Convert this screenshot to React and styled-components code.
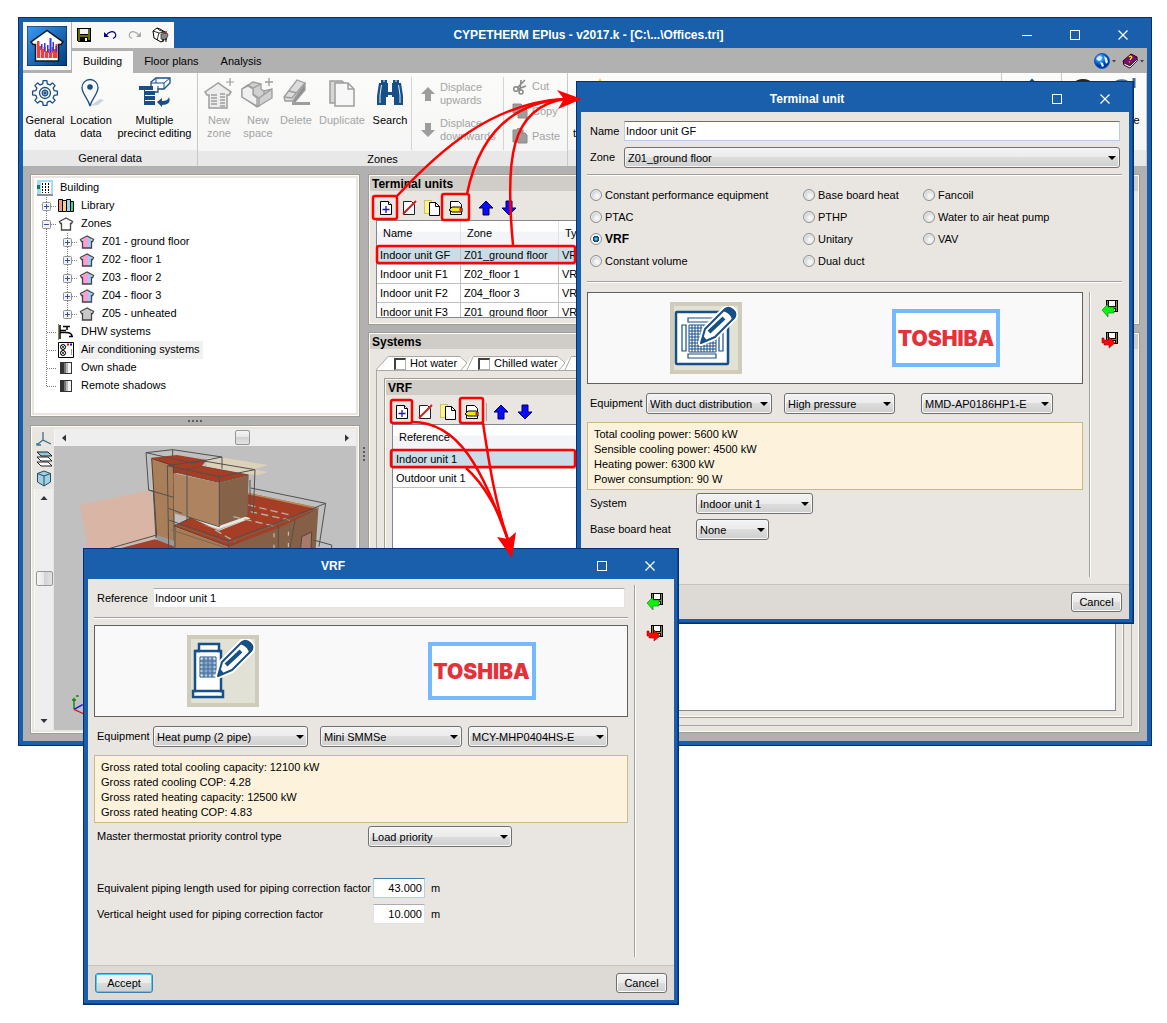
import styled, { createGlobalStyle, css } from "styled-components";

const BLUE = "#195fab";
const BEIGE = "#e9e6e1";
const INK = "#174f87";
const GREY = "#9d9d9d";

const GlobalStyle = createGlobalStyle`
  body {
    margin: 0;
    background-color: white;
  }

  * {
    box-sizing: border-box;
  }

  body, button, input, select, table {
    font-family: "Liberation Sans", Arial, sans-serif;
    font-size: 11px;
    line-height: 13px;
    color: black;
  }

  svg {
    display: block;
    flex: none;
  }
`;

const Desktop = styled.div`
  position: relative;
  min-height: 1023px;
  padding: 17px 15px 0 18px;
`;

/* ---------- windows ---------- */

const Frame = styled.section`
  border: 1px solid #052f74;
  padding: 4px;
  background-color: ${BLUE};
`;

const DialogFrame = styled(Frame)`
  position: absolute;
  left: ${(p) => p.$left}px;
  top: ${(p) => p.$top}px;
  width: ${(p) => p.$width}px;
  box-shadow: inset -1px -1px 0 #0b4590;
`;

const TitleBar = styled.header`
  display: flex;
  align-items: center;
  height: 26px;
  background-color: ${BLUE};
`;

const Title = styled.h1`
  flex: 1;
  margin: 0;
  color: white;
  font-size: 12px;
  font-weight: bold;
  text-align: center;
`;

const WindowButton = styled.button`
  display: flex;
  align-items: center;
  justify-content: center;
  width: 48px;
  height: 26px;
  padding: 0;
  border: none;
  background: none;
`;

const DialogBody = styled.div`
  background-color: ${BEIGE};
  padding: ${(p) => p.$pad};
`;

const DialogFooter = styled.footer`
  display: flex;
  justify-content: ${(p) => (p.$split ? "space-between" : "flex-end")};
  align-items: center;
  height: 35px;
  padding: 0 7px;
  border-top: 1px solid #c5c3be;
  background-color: #dddad5;
`;

const PushButton = styled.button`
  height: 20px;
  min-width: ${(p) => (p.$primary ? 58 : 51)}px;
  padding: 0 7px;
  border: 1px solid ${(p) => (p.$primary ? "#3c7fb1" : "#707070")};
  border-radius: 3px;
  background: linear-gradient(#f3f3f3, #ebebeb 50%, #dddddd 50%, #cfcfcf);
  box-shadow: inset 0 0 0 1px ${(p) => (p.$primary ? "#48d0f5" : "#fbfbfb")};
`;

/* ---------- main window header ---------- */

const Header = styled.div`
  display: grid;
  grid-template-columns: 49px 1fr;
`;

const AppBadge = styled.div`
  grid-row: span 2;
  display: flex;
  align-items: center;
  justify-content: center;
  border-right: 1px solid #b1b1b1;
  border-bottom: 3px solid #b1b1b1;
  background-color: #f8f8f6;
`;

const QuickBar = styled.div`
  display: flex;
  align-items: center;
  width: 102px;
  height: 26px;
  background-color: #f8f8f6;
`;

const ToolButton = styled.button`
  display: flex;
  align-items: center;
  justify-content: center;
  width: ${(p) => p.$width || 24}px;
  height: 24px;
  padding: 0;
  border: none;
  background: none;
`;

const TabBar = styled.nav`
  display: flex;
  align-items: flex-end;
  height: 25px;
  background-color: #b1b1b1;
`;

const RibbonTab = styled.button`
  height: 22px;
  padding: 0 11px 2px;
  border: none;
  background-color: ${(p) => (p.$active ? "#fafaf8" : "transparent")};
`;

const TabBarEnd = styled.div`
  display: flex;
  margin-left: auto;
`;

/* ---------- ribbon ---------- */

const Ribbon = styled.div`
  display: flex;
  height: 93px;
  background: linear-gradient(#fbfbf9, #f5f5f5);
`;

const RibbonGroup = styled.div`
  display: flex;
  flex-direction: column;
  flex: ${(p) => (p.$width ? `0 0 ${p.$width}px` : "1")};
  overflow: hidden;
  border-right: 1px solid #c9c9c9;
`;

const GroupItems = styled.div`
  display: flex;
  flex: 1;
  padding: 4px 0 0 ${(p) => p.$indent || 0}px;
`;

const GroupLabel = styled.div`
  height: 16px;
  padding-top: 2px;
  background-color: #e8e8e8;
  text-align: center;
`;

const RibbonButton = styled.button`
  display: flex;
  flex-direction: column;
  align-items: center;
  gap: 5px;
  width: ${(p) => p.$width}px;
  padding: 0;
  border: none;
  background: none;
  color: ${(p) => (p.$disabled ? "#a4a4a4" : "black")};
  white-space: pre;
`;

const CroppedCaption = styled.span`
  align-self: flex-start;
  margin-top: 13px;
`;

const RibbonStack = styled.div`
  display: flex;
  flex-direction: column;
  width: ${(p) => p.$width}px;
  margin-bottom: 1px;
  padding-left: 8px;
  border-left: 1px solid #d4d4d4;
`;

const StackButton = styled.button`
  display: flex;
  align-items: center;
  gap: 4px;
  height: ${(p) => p.$height}px;
  padding: 0;
  border: none;
  background: none;
  color: #a4a4a4;
  text-align: left;
  white-space: pre;
`;

/* ---------- work area ---------- */

const WorkArea = styled.main`
  display: flex;
  padding: 8px 7px 7px;
  background-color: #b1b1b1;
`;

const LeftColumn = styled.div`
  display: flex;
  flex-direction: column;
  flex: 0 0 330px;
`;

const RightColumn = styled.div`
  display: flex;
  flex-direction: column;
  gap: 7px;
  flex: 1;
  min-width: 0;
`;

const panelEdge = css`
  border: 1px solid #a19d92;
  box-shadow: inset 0 0 0 1px #fdfcf3;
  background-color: ${BEIGE};
`;

const TreePanel = styled.div`
  ${panelEdge}
  padding: 3px;
`;

const TreeList = styled.ul`
  margin: 0;
  padding: 1px 3px 18px;
  list-style: none;
  background-color: white;
`;

const TreeRow = styled.li`
  display: flex;
  align-items: center;
  height: 18px;
`;

const TreeText = styled.span`
  margin-left: 5px;
  padding: 2px 3px 3px 2px;
  background-color: ${(p) => (p.$selected ? "#f0f0f0" : "transparent")};
`;

const SplitterDots = styled.div`
  height: 8px;
  display: flex;
  align-items: center;
  justify-content: center;

  &::before {
    content: "";
    width: 15px;
    height: 2px;
    background: repeating-linear-gradient(90deg, #5c5c5c 0 2px, transparent 2px 4px);
  }
`;

const VerticalDots = styled.div`
  width: 8px;
  padding: 273px 3px 0;

  &::before {
    content: "";
    display: block;
    height: 14px;
    background: repeating-linear-gradient(#5c5c5c 0 2px, transparent 2px 4px);
  }
`;

const ViewPanel = styled.div`
  ${panelEdge}
  display: grid;
  grid-template-columns: 20px 1fr;
  grid-template-rows: 17px 1fr;
  flex: 1;
  padding: 3px;
`;

const ViewTools = styled.div`
  grid-row: span 2;
  display: flex;
  flex-direction: column;
  align-items: center;
`;

const ScrollTrack = styled.div`
  display: flex;
  flex-direction: ${(p) => (p.$vertical ? "column" : "row")};
  align-items: center;
  justify-content: space-between;
  flex: 1;
  align-self: stretch;
  padding: ${(p) => (p.$vertical ? "5px 0" : "0 5px")};
  margin-right: ${(p) => (p.$vertical ? 1 : 0)}px;
  background-color: #eeeeee;
  border-left: 1px solid #f8f8f8;
`;

const ScrollThumb = styled.div`
  width: ${(p) => (p.$vertical ? 17 : 15)}px;
  height: 15px;
  margin: ${(p) => (p.$vertical ? "0 0 62px" : "0 0 0 74px")};
  border: 1px solid #979797;
  border-radius: 2px;
  background: linear-gradient(${(p) => (p.$vertical ? "90deg" : "180deg")}, #f5f5f5, #e6e6e6 50%, #d2d2d2 50%, #e2e2e2);
`;

const Canvas = styled.div`
  min-height: 0;
  overflow: hidden;
  background-color: #c0c0c0;
`;

const Panel = styled.section`
  ${panelEdge}
  padding: 1px 1px 6px;
`;

const PanelTitle = styled.h2`
  margin: 0;
  height: 15px;
  padding-left: 2px;
  background-color: #d0cdc8;
  font-size: 12px;
  line-height: 16px;
  font-weight: bold;
`;

const Toolbar = styled.div`
  display: flex;
  align-items: center;
  height: 29px;
  padding: 5px 0 0 4px;
`;

const ToolDivider = styled.span`
  width: 1px;
  height: 18px;
  margin: 0 2px;
  background-color: #a9a69f;
`;

const GridFrame = styled.div`
  height: ${(p) => p.$height}px;
  margin: 0 6px;
  overflow: hidden;
  border: 1px solid #828790;
  background-color: white;
`;

const Grid = styled.table`
  width: 100%;
  table-layout: fixed;
  border-collapse: separate;
  border-spacing: 0;
  text-align: left;

  th {
    height: 25px;
    padding: 0 6px;
    border-right: 1px solid #e0e3e8;
    background: linear-gradient(white 40%, #f2f4f7 45%, #f4f5f8);
    font-weight: normal;
  }

  td {
    height: 19px;
    padding: 0 3px;
    border-right: 1px solid #c0c0c0;
    border-bottom: 1px solid #c0c0c0;
    white-space: nowrap;
  }
`;

const GridRow = styled.tr`
  background-color: ${(p) => (p.$selected ? "#c9dde8" : "white")};
`;

const SystemTabs = styled.div`
  display: flex;
  margin: 7px 6px 0;
`;

const SystemTab = styled.label`
  display: flex;
  align-items: center;
  gap: 4px;
  width: ${(p) => p.$width}px;
  height: 14px;
  padding-left: 5px;
  border-top: 1px solid #aaa7a0;
  background-color: white;
  white-space: nowrap;
`;

const TabCheck = styled.input`
  appearance: none;
  flex: none;
  width: 12px;
  height: 12px;
  margin: 0;
  border: 1px solid #b0b0b0;
  border-top: 2px solid #404040;
  border-left: 2px solid #404040;
  background-color: white;
`;

const SystemBox = styled.div`
  margin: 0 6px;
  padding: 7px;
  border: 1px solid #aaa7a0;
`;

/* ---------- form parts ---------- */

const FormRow = styled.div`
  display: grid;
  grid-template-columns: ${(p) => p.$columns};
  align-items: center;
  margin-top: ${(p) => p.$gap || 0}px;
  padding-left: 3px;
  white-space: nowrap;
`;

const TextBox = styled.input`
  width: 100%;
  height: 20px;
  padding: 0 2px 0 1px;
  border: 1px solid ${(p) => (p.$focus ? "#b5cfe7" : "#e2e3ea")};
  border-top-color: ${(p) => (p.$focus ? "#3d7bad" : "#abadb3")};
  background-color: white;
  text-align: ${(p) => (p.$number ? "right" : "left")};
`;

const SelectWrap = styled.span`
  position: relative;
  display: block;

  &::after {
    content: "";
    position: absolute;
    top: 9px;
    right: 4px;
    border: 4px solid transparent;
    border-top-color: black;
    border-bottom: none;
    pointer-events: none;
  }
`;

const SelectBox = styled.select`
  appearance: none;
  display: block;
  width: 100%;
  height: 21px;
  padding: 1px 14px 0 3px;
  border: 1px solid #707070;
  border-radius: 3px;
  background: linear-gradient(#f3f3f3, #ebebeb 50%, #dddddd 50%, #cfcfcf);
  box-shadow: inset 0 0 0 1px #f7f7f7;
`;

const Rule = styled.hr`
  height: 2px;
  margin: ${(p) => p.$margin};
  border: none;
  border-top: 1px solid #a0a0a0;
  border-bottom: 1px solid white;
`;

const RadioGrid = styled.div`
  display: grid;
  grid-template-columns: 213px 120px 1fr;
  padding-left: 3px;
`;

const RadioLabel = styled.label`
  display: flex;
  align-items: center;
  gap: 3px;
  height: 22px;
  font-size: ${(p) => (p.$bold ? 12 : 11)}px;
  font-weight: ${(p) => (p.$bold ? "bold" : "normal")};
`;

const Radio = styled.input`
  appearance: none;
  width: 12px;
  height: 12px;
  margin: 0;
  border: 1px solid #8e8f8f;
  border-radius: 50%;
  background: radial-gradient(circle at 60% 60%, #f4f4f4 20%, #cfd2d4 60%);
  box-shadow: inset 0 0 0 1px #f4f4f4;

  &:checked {
    background: radial-gradient(circle, #5cc8ee 8%, #0b4a78 35%, #12364f 42%, #f4f4f4 50%);
  }
`;

const Split = styled.div`
  display: flex;
`;

const FormSide = styled.div`
  flex: 1;
  min-width: 0;
`;

const ActionSide = styled.div`
  display: flex;
  flex-direction: column;
  align-items: center;
  gap: 8px;
  width: 40px;
  min-height: ${(p) => p.$minHeight}px;
  margin-left: 6px;
  margin-right: ${(p) => p.$outdent}px;
  padding-top: 4px;
  border-left: 1px solid #a0a0a0;
  box-shadow: inset 1px 0 0 white;
`;

const PictureBox = styled.div`
  display: flex;
  align-items: center;
  justify-content: space-around;
  height: 92px;
  padding: 0 7px;
  border: 1px solid #606060;
  background-color: #f9f9f9;
`;

const PictureFrame = styled.div`
  width: 72px;
  height: 72px;
  border: 4px solid #cfccb9;
  background-color: #e1e1d5;
`;

const BrandFrame = styled.div`
  display: flex;
  align-items: center;
  justify-content: center;
  width: 108px;
  height: 58px;
  border: 4px solid #76b9ff;
  background-color: white;
  color: #e5323a;
  font-family: Inter, "Liberation Sans", sans-serif;
  font-size: 21px;
  font-weight: 900;
`;

const InfoBox = styled.div`
  margin-top: 8px;
  padding: 4px 6px 2px;
  border: 1px solid #c6bd84;
  background-color: #fdf3dc;

  p {
    margin: 0;
    line-height: 15px;
  }
`;

const Unit = styled.span`
  padding-left: 6px;
`;

const Annotations = styled.svg`
  position: absolute;
  left: 0;
  top: 0;
  pointer-events: none;
`;

/* ---------- icons ---------- */

const MinimizeIcon = () => (
  <svg width="12" height="12" stroke="white">
    <path d="M1 6.5h10" />
  </svg>
);

const MaximizeIcon = () => (
  <svg width="12" height="12" fill="none" stroke="white">
    <rect x="1.5" y="1.5" width="9" height="9" />
  </svg>
);

const CloseIcon = () => (
  <svg width="12" height="12" stroke="white" strokeWidth="1.3">
    <path d="M1.500 1.500l9 9M10.500 1.500l-9 9" />
  </svg>
);

const AppIcon = () => (
  <svg width="40" height="40" viewBox="0 0 40 40">
    <defs>
      <linearGradient id="appBg" x1="0" y1="0" x2="1" y2="1">
        <stop offset="0" stopColor="#3b9bf4" />
        <stop offset="1" stopColor="#023a7c" />
      </linearGradient>
    </defs>
    <rect width="40" height="40" fill="url(#appBg)" stroke="#101c33" />
    <path d="M20 4.500L4 16l2 2.500h2.500V35h23V18.500H34l2-2.500z" fill="white" stroke="#101820" strokeWidth="1.500" />
    <path d="M10 32V15h2.500v5h2v3h2v-2h2v4h2v-2h2v4h2v-6h2v2h2v-5h2v14z" fill="#f33d3d" />
    <path d="M14 18h1.500v5H14zM17 17h1.500v8H17zM20 19h1.500v7H20zM22.500 12h2v15h-2zM25.500 16H27v9h-1.500zM28.500 20H30v6h-1.500z" fill="#3434e8" />
    <path d="M13 24h1v8h-1zM17 26h1v6h-1zM21 27h1v5h-1zM25 27h1v5h-1z" fill="white" opacity=".7" />
  </svg>
);

const FloppyIcon = () => (
  <svg width="14" height="14" shapeRendering="crispEdges">
    <path d="M0 0h14v14H1L0 13z" fill="#000" />
    <path d="M1 1h2v6h8V1h2v11h-2V9H3v4H1z" fill="#6b6b00" />
    <path d="M3 1h8v5H3z" fill="#f2f2f2" />
    <path d="M8 10h2v3H8z" fill="white" />
  </svg>
);

const UndoIcon = ({ color = "#000080", flip }) => (
  <svg width="14" height="12" viewBox="0 0 14 12">
    <g transform={flip ? "translate(14 0) scale(-1 1)" : undefined}>
      <path d="M1 3v5h5z" fill={color} />
      <path d="M3 6.500C6 2 10 2 12 4c1.500 2 1 4-2 5.500" fill="none" stroke={color} strokeWidth="1.200" />
    </g>
  </svg>
);

const PrintIcon = () => (
  <svg width="18" height="16" viewBox="0 0 18 16">
    <path d="M1 4l4-3 3 1 5 3 1 2-3 7-2 1-7-4z" fill="white" stroke="black" />
    <path d="M1 4l6 2 6-1M7 6l-2 7M5 1l2 2 5 2" fill="none" stroke="black" strokeWidth=".8" />
    <path d="M9 7l6-1 1 2-2 5-5-1z" fill="#888" stroke="#222" strokeWidth=".7" />
    <path d="M11 12v3M14 11v4" stroke="black" />
    <path d="M13 5h2" stroke="red" strokeWidth="1.500" />
  </svg>
);

const GlobeIcon = () => (
  <svg width="22" height="18" viewBox="0 0 22 18">
    <defs>
      <radialGradient id="globe" cx=".35" cy=".3">
        <stop offset="0" stopColor="#b9e6ff" />
        <stop offset=".5" stopColor="#268ae6" />
        <stop offset="1" stopColor="#02399a" />
      </radialGradient>
    </defs>
    <circle cx="8" cy="9" r="7.500" fill="url(#globe)" stroke="#0a55c9" />
    <path d="M2 7l3-3 3 1-1 3-2 1zM10 4l3 2 1 4-2 2-1-3zM6 10l3 1 1 3-2 1z" fill="#d8f3ff" />
    <path d="M18 8h4l-2 2.500z" fill="#444" />
  </svg>
);

const HelpIcon = () => (
  <svg width="22" height="18" viewBox="0 0 22 18">
    <path d="M1 9l8-7 6 3v4l-7 7-6-3z" fill="#7c0b76" stroke="#23021f" />
    <path d="M2 11l6 3 7-7v2l-7 7-6-3z" fill="white" stroke="#23021f" strokeWidth=".7" />
    <path d="M7 5c2-2 4 0 2 1.500L8 8M7.500 9.500v1" stroke="#ffe600" strokeWidth="1.300" fill="none" />
    <path d="M18 8h4l-2 2.500z" fill="#444" />
  </svg>
);

const gearOutline = () => {
  const n = 8;
  const points = [];
  for (let i = 0; i < n; i++) {
    const mid = (i * 2 * Math.PI) / n;
    [
      [-0.24, 9.5],
      [-0.15, 12.5],
      [0.15, 12.5],
      [0.24, 9.5],
    ].forEach(([da, r]) => {
      points.push(`${(r * Math.sin(mid + da)).toFixed(1)},${(-r * Math.cos(mid + da)).toFixed(1)}`);
    });
  }
  return points.join(" ");
};

const GearIcon = () => (
  <svg width="30" height="32" viewBox="-15 -16 30 32" fill="#fafafa" stroke={INK} strokeWidth="1.300">
    <polygon points={gearOutline()} strokeLinejoin="round" />
    <circle r="5.500" />
    <circle r="2.800" />
    <circle r="1" fill={INK} />
  </svg>
);

const PinIcon = () => (
  <svg width="30" height="32" viewBox="0 0 30 32">
    <path d="M14 29l10-7 4 1-6 5z" fill="#c9d6e2" />
    <path d="M14 29C12 21 6 17 6 10.500a8 8 0 0 1 16 0C22 17 16 21 14 29z" fill="#fafafa" stroke={INK} strokeWidth="1.300" />
    <circle cx="14" cy="10" r="2.800" fill={INK} />
  </svg>
);

const PrecinctIcon = () => (
  <svg width="34" height="32" viewBox="0 0 34 32">
    <path d="M13 5l5-4h14v5l-6 6h-6v3h-7z" fill="#fafafa" stroke={INK} strokeWidth="1.300" />
    <path d="M18 1v5h8l6-5M26 6v6M13 6h5M20 12V9" fill="none" stroke={INK} />
    <path d="M1 9h14v4H7v1h10v4H7v1h10v4H7v1h10v4H6V13H1z" fill={INK} />
    <path d="M8 18h9v1H8zM8 23h9v1H8zM8 13h9v1H8z" fill="#fafafa" />
    <path d="M19 25l5-4v3c4 0 6-1 7-4 2 5-1 8-7 8v2z" fill={INK} />
  </svg>
);

const ZoneIcon = () => (
  <svg width="32" height="32" viewBox="0 0 32 32" fill="none" stroke={GREY}>
    <path d="M15 6L2 15l2 3h2v13h18V18h2l2-3z" fill="#ededed" strokeWidth="1.500" />
    <path d="M8 18h6M8 21h6M8 24h6M8 27h6M17 17h5M17 20h5M17 23h5M17 26h5M17 29h5" strokeWidth="1.500" />
    <path d="M27 1v8M23 5h8" strokeWidth="1.200" />
  </svg>
);

const SpaceIcon = () => (
  <svg width="34" height="32" viewBox="0 0 34 32" fill="#d0d0d0" stroke={GREY} strokeWidth="1.300">
    <path d="M1 12l11-7 8 2v5l3 2 8-2v9L16 30 1 20z" />
    <path d="M1 12l6-4 5 3v6l6 4v9M18 21l13-9M7 8v3M12 11l8-4M23 14v4" fill="none" />
    <path d="M1 12l6-3 5 3v6l4 3v8L1 20z" fill="#f0f0f0" />
    <path d="M28 1v8M24 5h8" />
  </svg>
);

const EraserIcon = () => (
  <svg width="32" height="32" viewBox="0 0 32 32" stroke={GREY} strokeWidth="1.300">
    <path d="M4 20L17 3l8 3-12 18H5z" fill="#dcdcdc" />
    <path d="M4 20l8 1 12-14M9 14l8 2" fill="none" />
    <path d="M13 24l12-17v6L15 25z" fill="#8e8e8e" />
    <path d="M12 26.500h18" strokeWidth="3" />
  </svg>
);

const DuplicateIcon = () => (
  <svg width="30" height="32" viewBox="0 0 30 32" stroke={GREY} strokeWidth="1.500">
    <path d="M3 4h12l4 4v18H3z" fill="#d7d7d7" />
    <path d="M8 6h13l6 6v17H8z" fill="#f7f7f7" />
    <path d="M21 6v6h6" fill="none" />
  </svg>
);

const BinocularsIcon = () => (
  <svg width="30" height="32" viewBox="0 0 30 32" fill={INK}>
    <path d="M6 3h6v3h1v8h4V6h1V3h6v3h2l2 13v9h-9v-8h-2v-2h-4v2h-2v8H2v-9L4 6h2z" />
    <path d="M6.500 8L5 18v8M23.500 8L25 18v8M13 14.500h4M9 3v2M21 3v2" stroke="#e8eef5" fill="none" />
  </svg>
);

const ArrowIcon = ({ down, color = GREY, outline, size = 14 }) => (
  <svg width={size} height={size} viewBox="-1 -1 16 16">
    <path
      d="M7 0l7 7h-4v7H4V7H0z"
      fill={color}
      stroke={outline}
      transform={down ? "rotate(180 7 7)" : undefined}
    />
  </svg>
);

const ScissorsIcon = () => (
  <svg width="16" height="16" viewBox="0 0 16 16" fill="none" stroke="#888" strokeWidth="1.500">
    <circle cx="4" cy="10" r="2.300" />
    <circle cx="9" cy="13" r="2" />
    <path d="M5 9l8-8M8 11L9 1M6 10l8-3" />
  </svg>
);

const CopyIcon = () => (
  <svg width="16" height="16" viewBox="0 0 16 16" fill={GREY} stroke="#8a8a8a">
    <path d="M1 1h8l2 2v7H1z" />
    <path d="M6 5h7l2 2v8H6z" />
  </svg>
);

const PasteIcon = () => (
  <svg width="16" height="16" viewBox="0 0 16 16" fill={GREY} stroke="#8a8a8a">
    <path d="M1 2h4l1-2h2l1 2h2v12H1z" />
    <path d="M6 5h7l2 2v8H6z" />
  </svg>
);

const SheetPath = "M2.500 1.500h8l3 3v10h-11z";

const NewIcon = () => (
  <svg width="16" height="16" fill="white" stroke="black">
    <path d={SheetPath} />
    <path d="M10.500 1.500v3h3" />
    <path d="M4.500 9.500h7M8 6v7" stroke="#1a1a9c" strokeWidth="1.300" />
  </svg>
);

const RemoveIcon = () => (
  <svg width="16" height="16" fill="white" stroke="#222">
    <path d={SheetPath} />
    <path d="M2 14L15 1" stroke="#d81a1a" strokeWidth="2" />
  </svg>
);

const CopySheetIcon = () => (
  <svg width="18" height="16" stroke="black">
    <path d="M1.500.5h7v13h-7z" fill="#fdf58a" stroke="#a29a1c" strokeDasharray="1 1" />
    <path d="M6.500 2.500h6l4 4v9h-10z" fill="white" />
    <path d="M12.500 2.500v4h4" fill="none" />
  </svg>
);

const EditIcon = () => (
  <svg width="16" height="16" stroke="black">
    <path d={SheetPath} fill="white" />
    <path d="M1 10l3-3h8l2 1v4H4z" fill="#f6ea12" />
    <path d="M11.500 8h2v3.500h-2z" fill="#d42222" stroke="none" />
  </svg>
);

const ImportIcon = ({ exportMode }) => (
  <svg width="18" height="17" viewBox="0 0 18 17">
    <path d="M5 0h12v12H5z" fill="black" />
    <path d="M6 1h1v10H6zM15 1h1v10h-1zM8 7h7v1H8z" fill="#8a8527" />
    <path d="M8 1h6v5H8zM12 9h2v2h-2z" fill="white" />
    {exportMode ? (
      <path d="M1 6h2v2h5V5l6 6-6 5v-3H3v-2H1z" fill="#fb0707" stroke="#a80000" strokeWidth=".6" />
    ) : (
      <path d="M1 10l6-6v3h6v6H7v4z" fill="#0bf30b" stroke="#167016" strokeWidth=".6" />
    )}
  </svg>
);

const AxisIcon = () => (
  <svg width="16" height="20" viewBox="0 0 16 20" fill="none" stroke="#3c7189" strokeWidth="1.300">
    <path d="M7 3v8l8 4M7 11l-5 4M5 16H1v-2" />
  </svg>
);

const LayersIcon = () => (
  <svg width="17" height="20" viewBox="0 0 17 20" stroke="#222">
    <path d="M1 13h11l4 4H5z" fill="white" />
    <path d="M1 8h11l4 4H5z" fill="white" />
    <path d="M1 3h11l4 4H5z" fill="#8fc8e0" />
  </svg>
);

const CubeIcon = () => (
  <svg width="16" height="20" viewBox="0 0 16 20" fill="#9fd1e6" stroke="#2a4a5e">
    <path d="M1.500 4.500L8 2l6.500 2.500V13L8 17l-6.500-4z" />
    <path d="M1.500 4.500L8 7l6.500-2.500M8 7v10" fill="none" />
  </svg>
);

const TinyArrow = ({ rotate }) => (
  <svg width="8" height="8" viewBox="0 0 8 8">
    <path d="M4 2l3.500 4h-7z" fill="#333" transform={`rotate(${rotate} 4 4)`} />
  </svg>
);

const BuildingTreeIcon = () => (
  <svg width="16" height="16" shapeRendering="crispEdges">
    <path d="M0 0h16v16H0z" fill="#a5dcf5" />
    <path d="M4 2h10v12H4z" fill="white" />
    <path d="M5.500 3v10M8.500 3v10M11.500 3v10" stroke="black" strokeDasharray="2 1" />
    <path d="M0 5h3v4H0z" fill="#147a52" />
    <path d="M0 14h16v2H0z" fill="#8e8e8e" />
  </svg>
);

const BooksIcon = () => (
  <svg width="16" height="16" stroke="black">
    <path d="M.5 1.500h4v12h-4z" fill="#f0a184" />
    <path d="M4.500 2.500h4v11h-4z" fill="#f8d47c" />
    <path d="M8.500 1.500h4v12h-4z" fill="#9ed3f5" />
    <path d="M12.500 3.500h3v10h-3z" fill="#45d58a" />
  </svg>
);

const HouseIcon = ({ left = "white", right = "white" }) => (
  <svg width="16" height="16">
    <path d="M9 2.500L3.500 5v9H9z" fill={left} />
    <path d="M9 2.500L12.500 5v9H9z" fill={right} />
    <path d="M8 2L1.500 5.500l1 2h1v6.500h9V7.500h1l1-2z" fill="none" stroke="#444" strokeWidth="1.300" />
  </svg>
);

const TapIcon = () => (
  <svg width="16" height="16">
    <path d="M0 0h1v16H0z" fill="#8c8c3a" />
    <path d="M2 1v14M2 8.500h6c4 0 6 1 6 4M2 6.500h6M9 2v4M5 2.500h7M11 12.500h4" fill="none" stroke="black" strokeWidth="1.500" />
  </svg>
);

const AirIcon = () => (
  <svg width="16" height="16" fill="none" stroke="black">
    <path d="M.5.5h15v15H.5z" fill="white" />
    <circle cx="5" cy="5" r="2.500" />
    <circle cx="5" cy="11" r="2.500" />
    <path d="M3 3l4 4M7 3L3 7M3 9l4 4M7 9l-4 4" strokeWidth=".7" />
    <path d="M9 2.500h2" stroke="red" strokeWidth="2" />
    <path d="M12 2.500h2" stroke="blue" strokeWidth="2" />
    <path d="M13.500 7v6" stroke="#999" />
  </svg>
);

const ShadeIcon = () => (
  <svg width="16" height="16" shapeRendering="crispEdges">
    <path d="M2 2h12v12H2z" fill="#333" />
    <path d="M6 3h2v10H6z" fill="#777" />
    <path d="M8 3h2v10H8z" fill="#bbb" />
    <path d="M10 3h3v10h-3z" fill="#f2f2f2" />
  </svg>
);

const Guide = ({ vertical = "full", branch, box }) => (
  <svg width="21" height="18" fill="none" stroke="#808080">
    {vertical === "full" && <path d="M9.500 0v18" strokeDasharray="1 1" />}
    {vertical === "half" && <path d="M9.500 0v9" strokeDasharray="1 1" />}
    {branch && <path d="M10 9.500h10" strokeDasharray="1 1" />}
    {box && (
      <g>
        <rect x="5.500" y="5.500" width="8" height="8" rx="1" fill="#f3f3f3" stroke="#919191" />
        <path d={box === "plus" ? "M7 9.500h5M9.500 7v5" : "M7 9.500h5"} stroke="#3050a8" />
      </g>
    )}
  </svg>
);

const Pencil = () => (
  <g strokeLinejoin="round">
    <path d="M27 37l4-14L51 3q4-3 8 1t1 8L41 31z" fill="white" stroke="white" strokeWidth="6" />
    <path d="M27 37l4-14L51 3q4-3 8 1t1 8L41 31z" fill="white" stroke={INK} strokeWidth="2" />
    <path d="M27 37l2-7q2 1 4 5zM49 5l3-3q4-1 8 2t1 8l-3 3q0-7-9-10z" fill={INK} stroke="none" />
    <path d="M50 12L35 26" stroke={INK} strokeWidth="4" />
  </g>
);

const gridLines = (x, y, w, h, step) => {
  let d = "";
  for (let i = 0; i <= w; i += step) d += `M${x + i} ${y}v${h}`;
  for (let j = 0; j <= h; j += step) d += `M${x} ${y + j}h${w}`;
  return d;
};

const DuctPicture = () => (
  <svg width="64" height="64" viewBox="0 0 64 64" fill="white" stroke={INK}>
    <rect x="2" y="6" width="52" height="52" rx="1" strokeWidth="2.500" />
    <path d="M14 12h28v4H14zM14 48h28v4H14zM8 19h4v26H8zM45 19h4v26h-4z" strokeWidth="1.200" />
    <path d={gridLines(15, 19, 27, 27, 3)} />
    <Pencil />
  </svg>
);

const HeatPumpPicture = () => (
  <svg width="64" height="64" viewBox="0 0 64 64" fill="white" stroke={INK} strokeWidth="2.500">
    <path d="M8 5h20v7h2v40h2v6H2v-6h2V12h4z" />
    <path d="M5 12h24M4 52h27" />
    <path d={gridLines(9, 18, 16, 20, 4)} strokeWidth="1" />
    <path d={gridLines(11, 20, 12, 16, 4)} strokeWidth=".6" />
    <Pencil />
  </svg>
);

const ModelView = () => (
  <svg width="302" height="284" viewBox="102 78 906 852" strokeLinejoin="round">
    <path d="M180 255l212-45 18 140-202 60z" fill="#d9b5a5" />
    <path d="M560 115l50-2 135 22-45 13 45 8-35 10-150-25z" fill="#ddd1ba" />
    <path d="M395 113l75-8 90 15-20 25-85 18z" fill="#a63e25" />
    <path d="M395 115l65 22 3 247-53-34z" fill="#a97f5a" stroke="#5d3a26" strokeWidth="3" />
    <path d="M410 345l53 18v25h-53z" fill="#999" />
    <path d="M280 390l125-32 60 22v60H280z" fill="#a5412b" />
    <path d="M682 220l213 45-125 65-145 50-163-62 50-24h85z" fill="#a63e25" stroke="#6b3c2b" strokeWidth="3" />
    <path d="M682 220l213 45" stroke="#b98a5b" strokeWidth="5" />
    <path d="M462 320l163 60v70H462z" fill="#a77b56" />
    <path d="M625 380l145-54 125-60-12 184H625z" fill="#856046" />
    <path d="M510 292l20-4 66 26 76-25 20 6-95 37z" fill="#e9e6e1" />
    <path d="M540 311l56 16 80-28-79 32z" fill="#b5b0a9" />
    <path d="M460 155l85-16 140 26-88 22z" fill="#a63e25" stroke="#7b4433" strokeWidth="3" />
    <path d="M460 160l137 28v130l-135-38z" fill="#ad8360" />
    <path d="M597 188l89-22-4 122-85 30z" fill="#866249" />
    <path d="M845 350l30-14-2 50-32 10z" fill="#a87a6c" stroke="#554433" strokeWidth="3" />
    <path d="M685 255l125 30M690 275l120 25M640 290l130 30M585 330l60 35" stroke="#b9ada5" strokeWidth="4" fill="none" strokeDasharray="22 12" />
    <g fill="none" stroke="#505050" strokeWidth="3">
      <path d="M378 98l80-9 148 22-90 18zM378 98l8 112 14 4 8 140M458 89v22M606 111v35M386 210l75 22" />
      <path d="M442 137l103-15 160 27-107 21zM442 137l4 247M501 145v160M598 170v150M705 149l-5 130M598 320l-97-30" />
      <path d="M446 300l179 62 150-55 142-57-225-46M917 250l-20 130M446 265l40 15M690 180v100M465 315v70M625 362v22M775 307v77M825 300l-15 84M880 360l55 15v9M270 385l140-40" />
      <path d="M463 312l162 57 265-103M455 330l170 56" stroke="#776655" />
      <path d="M762 340v50M805 335v50" stroke="#d8d0c8" strokeDasharray="12 22" />
    </g>
    <path d="M162 868v-35M156 840h12M168 828h8" stroke="#008800" strokeWidth="4" />
    <path d="M162 868l26-14" stroke="#1111ee" strokeWidth="4" />
    <path d="M162 868l30 14" stroke="#dd1111" strokeWidth="4" />
  </svg>
);

/* ---------- data ---------- */

const TREE = [
  { text: "Building", icon: <BuildingTreeIcon />, level: 0 },
  { text: "Library", icon: <BooksIcon />, level: 1, box: "plus" },
  { text: "Zones", icon: <HouseIcon />, level: 1, box: "minus" },
  { text: "Z01 - ground floor", icon: <HouseIcon left="#ff9ed2" right="#9ad0fb" />, level: 2, box: "plus" },
  { text: "Z02 - floor 1", icon: <HouseIcon left="#ff9ed2" right="#9ad0fb" />, level: 2, box: "plus" },
  { text: "Z03 - floor 2", icon: <HouseIcon left="#ff9ed2" right="#9ad0fb" />, level: 2, box: "plus" },
  { text: "Z04 - floor 3", icon: <HouseIcon left="#ff9ed2" right="#9ad0fb" />, level: 2, box: "plus" },
  { text: "Z05 - unheated", icon: <HouseIcon left="#c8c8c8" right="#c8c8c8" />, level: 2, box: "plus", last: true },
  { text: "DHW systems", icon: <TapIcon />, level: 1 },
  { text: "Air conditioning systems", icon: <AirIcon />, level: 1, selected: true },
  { text: "Own shade", icon: <ShadeIcon />, level: 1 },
  { text: "Remote shadows", icon: <ShadeIcon />, level: 1, last: true },
];

const TERMINAL_UNITS = [
  ["Indoor unit GF", "Z01_ground floor", "VRF"],
  ["Indoor unit F1", "Z02_floor 1", "VRF"],
  ["Indoor unit F2", "Z04_floor 3", "VRF"],
  ["Indoor unit F3", "Z01_ground floor", "VRF"],
];

const EQUIPMENT_TYPES = [
  "Constant performance equipment",
  "Base board heat",
  "Fancoil",
  "PTAC",
  "PTHP",
  "Water to air heat pump",
  "VRF",
  "Unitary",
  "VAV",
  "Constant volume",
  "Dual duct",
];

/* ---------- composed pieces ---------- */

function WindowButtons({ minimize }) {
  return (
    <>
      {minimize && (
        <WindowButton aria-label="Minimize">
          <MinimizeIcon />
        </WindowButton>
      )}
      <WindowButton aria-label="Maximize">
        <MaximizeIcon />
      </WindowButton>
      <WindowButton aria-label="Close">
        <CloseIcon />
      </WindowButton>
    </>
  );
}

function Select({ id, label, value }) {
  return (
    <SelectWrap>
      <SelectBox id={id} aria-label={label} defaultValue={value}>
        <option>{value}</option>
      </SelectBox>
    </SelectWrap>
  );
}

function ListTools({ divider }) {
  return (
    <Toolbar>
      <ToolButton aria-label="New">
        <NewIcon />
      </ToolButton>
      <ToolButton $width={22} aria-label="Delete">
        <RemoveIcon />
      </ToolButton>
      <ToolButton aria-label="Copy">
        <CopySheetIcon />
      </ToolButton>
      <ToolButton aria-label="Edit">
        <EditIcon />
      </ToolButton>
      {divider && <ToolDivider />}
      <ToolButton $width={divider ? 24 : 36} aria-label="Move up">
        <ArrowIcon size={16} color="#0a0aff" outline="#00005a" />
      </ToolButton>
      <ToolButton $width={divider ? 24 : 10} aria-label="Move down">
        <ArrowIcon size={16} down color="#0a0aff" outline="#00005a" />
      </ToolButton>
    </Toolbar>
  );
}

function SideActions({ minHeight, outdent }) {
  return (
    <ActionSide $minHeight={minHeight} $outdent={outdent}>
      <ToolButton aria-label="Import">
        <ImportIcon />
      </ToolButton>
      <ToolButton aria-label="Export">
        <ImportIcon exportMode />
      </ToolButton>
    </ActionSide>
  );
}

function Tree() {
  return (
    <TreePanel>
      <TreeList>
        {TREE.map((item) => (
          <TreeRow key={item.text}>
            {item.level === 1 && (
              <Guide vertical={item.last ? "half" : "full"} branch box={item.box} />
            )}
            {item.level === 2 && (
              <>
                <Guide />
                <Guide vertical={item.last ? "half" : "full"} branch box={item.box} />
              </>
            )}
            {item.icon}
            <TreeText $selected={item.selected}>{item.text}</TreeText>
          </TreeRow>
        ))}
      </TreeList>
    </TreePanel>
  );
}

function MainRibbon() {
  return (
    <Ribbon>
      <RibbonGroup $width={175}>
        <GroupItems>
          <RibbonButton $width={44}>
            <GearIcon />
            {"General\ndata"}
          </RibbonButton>
          <RibbonButton $width={48}>
            <PinIcon />
            {"Location\ndata"}
          </RibbonButton>
          <RibbonButton $width={79}>
            <PrecinctIcon />
            {"Multiple\nprecinct editing"}
          </RibbonButton>
        </GroupItems>
        <GroupLabel>General data</GroupLabel>
      </RibbonGroup>
      <RibbonGroup $width={370}>
        <GroupItems $indent={1}>
          <RibbonButton $width={40} $disabled>
            <ZoneIcon />
            {"New\nzone"}
          </RibbonButton>
          <RibbonButton $width={38} $disabled>
            <SpaceIcon />
            {"New\nspace"}
          </RibbonButton>
          <RibbonButton $width={38} $disabled>
            <EraserIcon />
            Delete
          </RibbonButton>
          <RibbonButton $width={54} $disabled>
            <DuplicateIcon />
            Duplicate
          </RibbonButton>
          <RibbonButton $width={42}>
            <BinocularsIcon />
            Search
          </RibbonButton>
          <RibbonStack $width={92}>
            <StackButton $height={33}>
              <ArrowIcon size={16} />
              {"Displace\nupwards"}
            </StackButton>
            <StackButton $height={40}>
              <ArrowIcon size={16} down />
              {"Displace\ndownwards"}
            </StackButton>
          </RibbonStack>
          <RibbonStack $width={62}>
            <StackButton $height={19}>
              <ScissorsIcon />
              Cut
            </StackButton>
            <StackButton $height={30}>
              <CopyIcon />
              Copy
            </StackButton>
            <StackButton $height={20}>
              <PasteIcon />
              Paste
            </StackButton>
          </RibbonStack>
        </GroupItems>
        <GroupLabel>Zones</GroupLabel>
      </RibbonGroup>
      <RibbonGroup>
        <GroupItems $indent={5}>
          <RibbonButton $width={54}>
            <svg width="30" height="32" viewBox="0 0 30 32">
              <path d="M15 1l6 12H9z" fill="#ffd21a" />
            </svg>
            <CroppedCaption>t</CroppedCaption>
          </RibbonButton>
        </GroupItems>
        <GroupLabel />
      </RibbonGroup>
      <RibbonGroup $width={60}>
        <GroupItems>
          <RibbonButton $width={60}>
            <ArrowIcon size={24} color={INK} />
          </RibbonButton>
        </GroupItems>
        <GroupLabel />
      </RibbonGroup>
      <RibbonGroup $width={85}>
        <GroupItems>
          <RibbonButton $width={42}>
            <svg width="30" height="32">
              <circle cx="15" cy="16" r="14" fill="#222" />
            </svg>
          </RibbonButton>
          <RibbonButton $width={36}>
            <svg width="30" height="32" fill="none" stroke="#3c6d9c" strokeWidth="3">
              <path d="M4 12C8 1 22 1 25 12M27 1v10" />
            </svg>
            Update
          </RibbonButton>
        </GroupItems>
        <GroupLabel />
      </RibbonGroup>
    </Ribbon>
  );
}

function MainWindow() {
  return (
    <Frame>
      <Header>
        <AppBadge>
          <AppIcon />
        </AppBadge>
        <TitleBar>
          <QuickBar>
            <ToolButton $width={25} aria-label="Save">
              <FloppyIcon />
            </ToolButton>
            <ToolButton $width={26} aria-label="Undo">
              <UndoIcon />
            </ToolButton>
            <ToolButton $width={26} aria-label="Redo">
              <UndoIcon flip color="#a8a8a8" />
            </ToolButton>
            <ToolButton $width={26} aria-label="Print">
              <PrintIcon />
            </ToolButton>
          </QuickBar>
          <Title>{"CYPETHERM EPlus - v2017.k - [C:\\...\\Offices.tri]"}</Title>
          <WindowButtons minimize />
        </TitleBar>
        <TabBar>
          <RibbonTab $active>Building</RibbonTab>
          <RibbonTab>Floor plans</RibbonTab>
          <RibbonTab>Analysis</RibbonTab>
          <TabBarEnd>
            <ToolButton $width={28} aria-label="Web">
              <GlobeIcon />
            </ToolButton>
            <ToolButton $width={28} aria-label="Help">
              <HelpIcon />
            </ToolButton>
          </TabBarEnd>
        </TabBar>
      </Header>
      <MainRibbon />
      <WorkArea>
        <LeftColumn>
          <Tree />
          <SplitterDots />
          <ViewPanel>
            <ViewTools>
              <AxisIcon />
              <LayersIcon />
              <CubeIcon />
              <ScrollTrack $vertical>
                <TinyArrow rotate={0} />
                <ScrollThumb $vertical />
                <TinyArrow rotate={180} />
              </ScrollTrack>
            </ViewTools>
            <ScrollTrack>
              <TinyArrow rotate={-90} />
              <ScrollThumb />
              <TinyArrow rotate={90} />
            </ScrollTrack>
            <Canvas>
              <ModelView />
            </Canvas>
          </ViewPanel>
        </LeftColumn>
        <VerticalDots />
        <RightColumn>
          <Panel>
            <PanelTitle>Terminal units</PanelTitle>
            <ListTools />
            <GridFrame $height={98}>
              <Grid>
                <colgroup>
                  <col width="84" />
                  <col width="98" />
                  <col />
                </colgroup>
                <thead>
                  <tr>
                    <th>Name</th>
                    <th>Zone</th>
                    <th>Type</th>
                  </tr>
                </thead>
                <tbody>
                  {TERMINAL_UNITS.map((row, i) => (
                    <GridRow key={row[0]} $selected={i === 0}>
                      {row.map((cell, j) => (
                        <td key={j}>{cell}</td>
                      ))}
                    </GridRow>
                  ))}
                </tbody>
              </Grid>
            </GridFrame>
          </Panel>
          <Panel>
            <PanelTitle>Systems</PanelTitle>
            <SystemTabs>
              <svg width="13" height="14">
                <path d="M0 14L12 .5h1V14z" fill="white" stroke="#aaa7a0" strokeDasharray="19 30" />
              </svg>
              <SystemTab $width={71}>
                <TabCheck type="checkbox" />
                Hot water
              </SystemTab>
              <svg width="13" height="14">
                <path d="M0 0h1l6 7 6-7v14H0z" fill="white" />
                <path d="M0 .5l7 6.500-6 7M7 14l6-13" fill="none" stroke="#aaa7a0" />
              </svg>
              <SystemTab $width={85}>
                <TabCheck type="checkbox" />
                Chilled water
              </SystemTab>
              <svg width="13" height="14">
                <path d="M0 0h1l6 7 6-7v14H0z" fill="white" />
                <path d="M0 .5l7 6.500-6 7M7 14l6-13" fill="none" stroke="#aaa7a0" />
              </svg>
              <SystemTab $width={60}>
                <TabCheck type="checkbox" />
                VRF
              </SystemTab>
            </SystemTabs>
            <SystemBox>
              <Panel>
                <PanelTitle>VRF</PanelTitle>
                <ListTools divider />
                <GridFrame $height={287}>
                  <Grid>
                    <thead>
                      <tr>
                        <th>Reference</th>
                      </tr>
                    </thead>
                    <tbody>
                      <GridRow $selected>
                        <td>Indoor unit 1</td>
                      </GridRow>
                      <GridRow>
                        <td>Outdoor unit 1</td>
                      </GridRow>
                    </tbody>
                  </Grid>
                </GridFrame>
              </Panel>
            </SystemBox>
          </Panel>
        </RightColumn>
      </WorkArea>
    </Frame>
  );
}

function TerminalUnitDialog() {
  return (
    <DialogFrame $left={576} $top={81} $width={558}>
      <TitleBar>
        <Title>Terminal unit</Title>
        <WindowButtons />
      </TitleBar>
      <DialogBody $pad="9px 7px 7px 6px">
        <FormRow $columns="34px 1fr 2px">
          <label htmlFor="tu-name">Name</label>
          <TextBox id="tu-name" $focus defaultValue="Indoor unit GF" />
        </FormRow>
        <FormRow $columns="34px 1fr 2px" $gap={6}>
          <label htmlFor="tu-zone">Zone</label>
          <Select id="tu-zone" value="Z01_ground floor" />
        </FormRow>
        <Rule $margin="6px 0 8px" />
        <RadioGrid>
          {EQUIPMENT_TYPES.map((type) => (
            <RadioLabel key={type} $bold={type === "VRF"}>
              <Radio type="radio" name="equipment-type" defaultChecked={type === "VRF"} />
              {type}
            </RadioLabel>
          ))}
        </RadioGrid>
        <Rule $margin="9px 0 9px" />
        <Split>
          <FormSide>
            <PictureBox>
              <PictureFrame>
                <DuctPicture />
              </PictureFrame>
              <BrandFrame>TOSHIBA</BrandFrame>
            </PictureBox>
            <FormRow $columns="56px 126px 12px 111px 26px 132px" $gap={9}>
              <label htmlFor="tu-equipment">Equipment</label>
              <Select id="tu-equipment" value="With duct distribution" />
              <span />
              <Select label="Pressure" value="High pressure" />
              <span />
              <Select label="Model" value="MMD-AP0186HP1-E" />
            </FormRow>
            <InfoBox>
              <p>Total cooling power: 5600 kW</p>
              <p>Sensible cooling power: 4500 kW</p>
              <p>Heating power: 6300 kW</p>
              <p>Power consumption: 90 W</p>
            </InfoBox>
            <FormRow $columns="106px 117px" $gap={3}>
              <label htmlFor="tu-system">System</label>
              <Select id="tu-system" value="Indoor unit 1" />
            </FormRow>
            <FormRow $columns="106px 73px" $gap={5}>
              <label htmlFor="tu-base">Base board heat</label>
              <Select id="tu-base" value="None" />
            </FormRow>
          </FormSide>
          <SideActions minHeight={285} outdent={-7} />
        </Split>
      </DialogBody>
      <DialogFooter>
        <PushButton>Cancel</PushButton>
      </DialogFooter>
    </DialogFrame>
  );
}

function VrfDialog() {
  return (
    <DialogFrame $left={83} $top={548} $width={596}>
      <TitleBar>
        <Title>VRF</Title>
        <WindowButtons />
      </TitleBar>
      <DialogBody $pad="6px 6px 8px">
        <Split>
          <FormSide>
            <FormRow $columns="56px 1fr 3px" $gap={3}>
              <label htmlFor="vrf-reference">Reference</label>
              <TextBox id="vrf-reference" defaultValue="Indoor unit 1" />
            </FormRow>
            <Rule $margin="9px 0 6px" />
            <PictureBox>
              <PictureFrame>
                <HeatPumpPicture />
              </PictureFrame>
              <BrandFrame>TOSHIBA</BrandFrame>
            </PictureBox>
            <FormRow $columns="56px 155px 12px 142px 6px 140px" $gap={9}>
              <label htmlFor="vrf-equipment">Equipment</label>
              <Select id="vrf-equipment" value="Heat pump (2 pipe)" />
              <span />
              <Select label="Range" value="Mini SMMSe" />
              <span />
              <Select label="Model" value="MCY-MHP0404HS-E" />
            </FormRow>
            <InfoBox>
              <p>Gross rated total cooling capacity: 12100 kW</p>
              <p>Gross rated cooling COP: 4.28</p>
              <p>Gross rated heating capacity: 12500 kW</p>
              <p>Gross rated heating COP: 4.83</p>
            </InfoBox>
            <FormRow $columns="271px 144px" $gap={3}>
              <label htmlFor="vrf-priority">Master thermostat priority control type</label>
              <Select id="vrf-priority" value="Load priority" />
            </FormRow>
            <FormRow $columns="276px 52px 1fr" $gap={31}>
              <label htmlFor="vrf-length">Equivalent piping length used for piping correction factor</label>
              <TextBox id="vrf-length" $focus $number defaultValue="43.000" />
              <Unit>m</Unit>
            </FormRow>
            <FormRow $columns="276px 52px 1fr" $gap={6}>
              <label htmlFor="vrf-height">Vertical height used for piping correction factor</label>
              <TextBox id="vrf-height" $number defaultValue="10.000" />
              <Unit>m</Unit>
            </FormRow>
          </FormSide>
          <SideActions minHeight={372} outdent={-6} />
        </Split>
      </DialogBody>
      <DialogFooter $split>
        <PushButton $primary>Accept</PushButton>
        <PushButton>Cancel</PushButton>
      </DialogFooter>
    </DialogFrame>
  );
}

function Callouts() {
  return (
    <Annotations width="1140" height="700" fill="none" stroke="#fe0000" strokeWidth="2.500">
      <rect x="373" y="196" width="24" height="23" rx="2" />
      <rect x="442" y="194" width="27" height="26" rx="2" />
      <rect x="377" y="246" width="198" height="17" rx="2" />
      <rect x="391" y="400" width="21" height="23" rx="2" />
      <rect x="460" y="398" width="23" height="25" rx="2" />
      <rect x="391" y="450" width="184" height="17" rx="2" />
      <path d="M397 196C440 150 492 103 564 99" />
      <path d="M467 194C476 150 500 104 564 99" />
      <path d="M513 245C505 160 510 108 564 99" />
      <path d="M412 422C460 422 482 470 508 540" />
      <path d="M466 468C484 484 500 512 508 540" />
      <path d="M483 423C490 470 496 505 508 540" />
      <path d="M582 99l-25-9 7 9-6 10zM512 558l4-26-8 7-11-2z" fill="#fe0000" stroke="none" />
    </Annotations>
  );
}

export default function App() {
  return (
    <>
      <GlobalStyle />
      <Desktop>
        <MainWindow />
        <TerminalUnitDialog />
        <VrfDialog />
        <Callouts />
      </Desktop>
    </>
  );
}
